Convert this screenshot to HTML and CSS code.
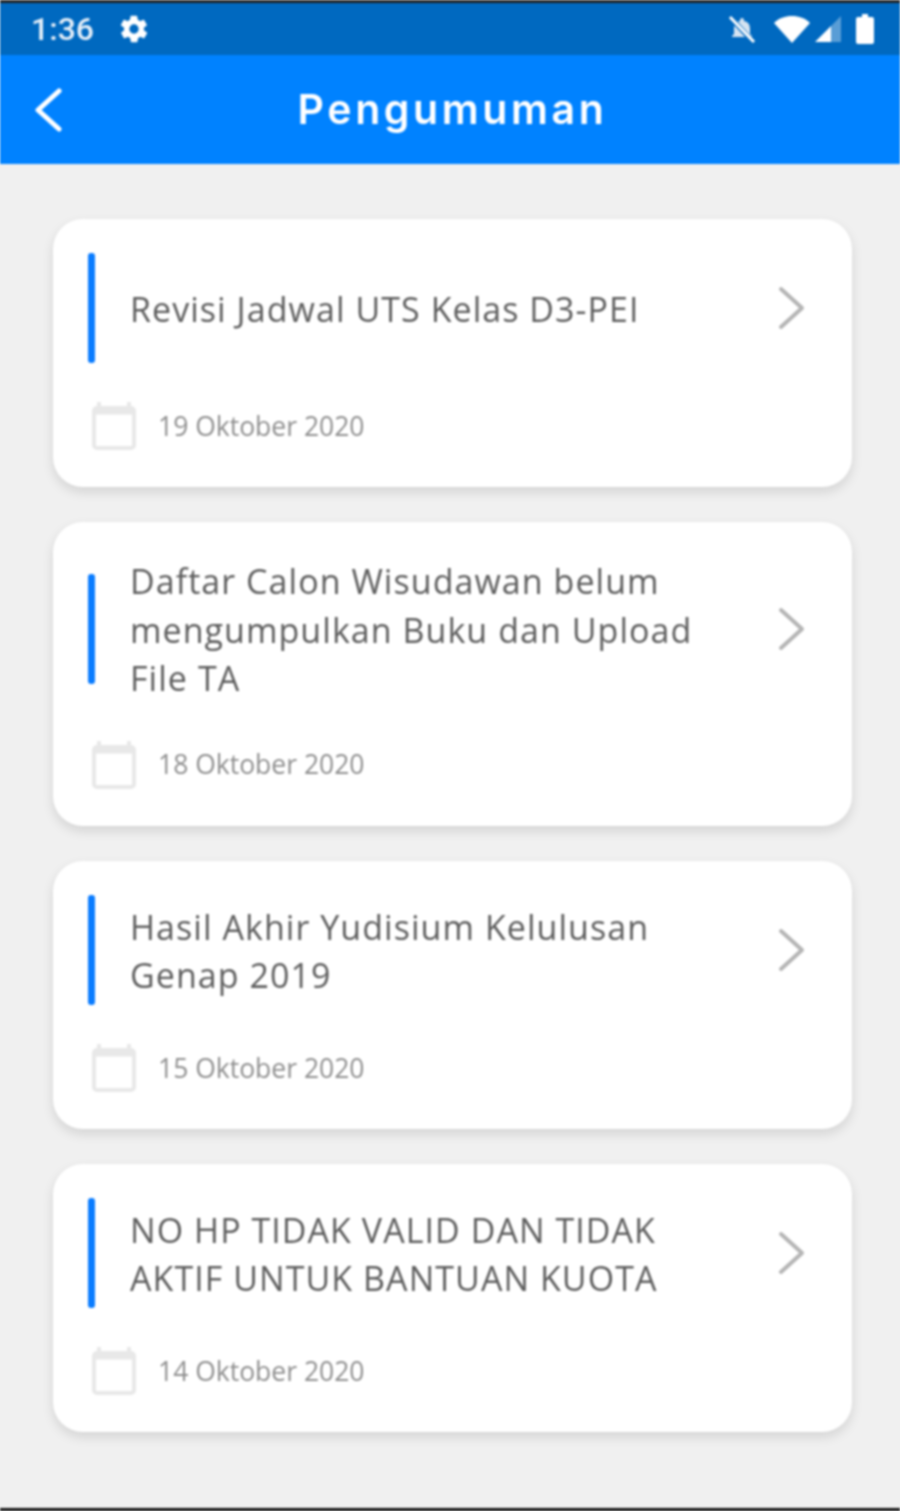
FILE: index.html
```html
<!DOCTYPE html>
<html lang="id">
<head>
<meta charset="utf-8">
<title>Pengumuman</title>
<link rel="stylesheet" href="styles.css">
</head>
<body>
<div class="app">
  <div class="edge-top"></div>
  <div class="statusbar">
    <div class="status-left">
      <span class="clock">1:36</span>
      <svg class="gear" viewBox="0 0 24 24"><path d="M19.4 13a7.6 7.6 0 0 0 0-2l2.1-1.6a.5.5 0 0 0 .1-.6l-2-3.5a.5.5 0 0 0-.6-.2l-2.5 1a7.3 7.3 0 0 0-1.7-1l-.4-2.7a.5.5 0 0 0-.5-.4h-4a.5.5 0 0 0-.5.4l-.4 2.7a7.3 7.3 0 0 0-1.7 1l-2.5-1a.5.5 0 0 0-.6.2l-2 3.5a.5.5 0 0 0 .1.6L4.6 11a7.6 7.6 0 0 0 0 2l-2.1 1.6a.5.5 0 0 0-.1.6l2 3.5c.1.2.4.3.6.2l2.5-1c.5.4 1.1.7 1.7 1l.4 2.7c0 .2.2.4.5.4h4c.3 0 .5-.2.5-.4l.4-2.7c.6-.3 1.2-.6 1.7-1l2.5 1c.2.1.5 0 .6-.2l2-3.5a.5.5 0 0 0-.1-.6zM12 15.5a3.5 3.5 0 1 1 0-7 3.5 3.5 0 0 1 0 7z"/></svg>
    </div>
    <div class="status-right">
      <svg class="bell" viewBox="0 0 28 28"><path class="bell-body" d="M14 3a2 2 0 0 0-2 2v1a7 7 0 0 0-6 7v6l-2 2v1h20v-1l-2-2v-6a7 7 0 0 0-6-7V5a2 2 0 0 0-2-2z"/><path class="bell-slash-gap" d="M3 3l22 24"/><path class="bell-slash" d="M2 2l24 25"/></svg>
      <svg class="wifi" viewBox="0 0 36 28"><path d="M0 8C5 3 11 1 18 1s13 2 18 7L18 28z"/></svg>
      <svg class="signal" viewBox="0 0 28 28"><path class="signal-empty" d="M27 1v26H17V11z"/><path d="M17 11v16H1z"/></svg>
      <svg class="battery" viewBox="0 0 18 30"><path d="M6 0h6v3h4a2 2 0 0 1 2 2v23a2 2 0 0 1-2 2H2a2 2 0 0 1-2-2V5a2 2 0 0 1 2-2h4z"/></svg>
    </div>
  </div>
  <header class="appbar">
    <svg class="back" viewBox="0 0 30 44"><path d="M26 3L5 22l21 19"/></svg>
    <h1 class="appbar-title">Pengumuman</h1>
  </header>
  <main class="list">
    <article class="card">
      <div class="card-main">
        <span class="accent"></span>
        <h2 class="card-title">Revisi Jadwal UTS Kelas D3-PEI</h2>
        <svg class="chevron" viewBox="0 0 28 44"><path d="M3 3l21 19L3 41"/></svg>
      </div>
      <div class="card-date">
        <svg class="calendar" viewBox="0 0 44 48"><path class="cal-ears" d="M7 0v6M37 0v6"/><rect class="cal-frame" x="2" y="6" width="40" height="40" rx="3"/><path class="cal-band" d="M2 9h40"/></svg>
        <span class="date-text">19 Oktober 2020</span>
      </div>
    </article>
    <article class="card">
      <div class="card-main">
        <span class="accent"></span>
        <h2 class="card-title">Daftar Calon Wisudawan belum mengumpulkan Buku dan Upload File TA</h2>
        <svg class="chevron" viewBox="0 0 28 44"><path d="M3 3l21 19L3 41"/></svg>
      </div>
      <div class="card-date">
        <svg class="calendar" viewBox="0 0 44 48"><path class="cal-ears" d="M7 0v6M37 0v6"/><rect class="cal-frame" x="2" y="6" width="40" height="40" rx="3"/><path class="cal-band" d="M2 9h40"/></svg>
        <span class="date-text">18 Oktober 2020</span>
      </div>
    </article>
    <article class="card">
      <div class="card-main">
        <span class="accent"></span>
        <h2 class="card-title">Hasil Akhir Yudisium Kelulusan Genap 2019</h2>
        <svg class="chevron" viewBox="0 0 28 44"><path d="M3 3l21 19L3 41"/></svg>
      </div>
      <div class="card-date">
        <svg class="calendar" viewBox="0 0 44 48"><path class="cal-ears" d="M7 0v6M37 0v6"/><rect class="cal-frame" x="2" y="6" width="40" height="40" rx="3"/><path class="cal-band" d="M2 9h40"/></svg>
        <span class="date-text">15 Oktober 2020</span>
      </div>
    </article>
    <article class="card">
      <div class="card-main">
        <span class="accent"></span>
        <h2 class="card-title">NO HP TIDAK VALID DAN TIDAK AKTIF UNTUK BANTUAN KUOTA</h2>
        <svg class="chevron" viewBox="0 0 28 44"><path d="M3 3l21 19L3 41"/></svg>
      </div>
      <div class="card-date">
        <svg class="calendar" viewBox="0 0 44 48"><path class="cal-ears" d="M7 0v6M37 0v6"/><rect class="cal-frame" x="2" y="6" width="40" height="40" rx="3"/><path class="cal-band" d="M2 9h40"/></svg>
        <span class="date-text">14 Oktober 2020</span>
      </div>
    </article>
  </main>
  <div class="edge-bottom"></div>
</div>
</body>
</html>
```
FILE: styles.css
```css
* { box-sizing: border-box; }
html, body { margin: 0; padding: 0; background: #f0f0f0; }
body { overflow: hidden; }
.app {
  width: 900px;
  height: 1511px;
  display: flex;
  flex-direction: column;
  background: #f0f0f0;
  font-family: "Open Sans", sans-serif;
  filter: blur(1px);
}
.edge-top { height: 3px; background: #222; flex: none; }
.edge-bottom { height: 3px; background: #111; flex: none; }
.statusbar {
  height: 52px;
  flex: none;
  background: #0069c0;
  display: flex;
  align-items: center;
  justify-content: space-between;
  padding: 0 26px 0 31px;
  color: #fff;
}
.status-left, .status-right { display: flex; align-items: center; }
.clock { font-family: Roboto, sans-serif; font-size: 32px; font-weight: 500; line-height: 1; color: #e4eef8; }
.gear { width: 32px; height: 32px; margin-left: 24px; fill: #fff; }
.bell { width: 28px; height: 28px; margin-right: 18px; }
.bell-body { fill: #d5e3f1; }
.bell-slash-gap { stroke: #0069c0; stroke-width: 5; fill: none; }
.bell-slash { stroke: #fff; stroke-width: 3; fill: none; }
.wifi { width: 36px; height: 28px; fill: #fff; }
.signal { width: 28px; height: 28px; fill: #fff; margin-left: 4px; }
.signal-empty { fill: #fff; opacity: .35; }
.battery { width: 18px; height: 30px; fill: #fff; margin-left: 14px; }
.appbar {
  height: 109px;
  flex: none;
  background: #0082ff;
  position: relative;
  display: flex;
  align-items: center;
  justify-content: center;
  padding-left: 5px;
}
.back {
  position: absolute;
  left: 33px;
  top: 33px;
  width: 30px;
  height: 44px;
  fill: none;
  stroke: #fff;
  stroke-width: 5;
  stroke-linecap: round;
  stroke-linejoin: round;
}
.appbar-title {
  margin: 0;
  font-family: Inter, sans-serif;
  font-weight: 600;
  font-size: 41px;
  letter-spacing: 3.6px;
  line-height: 1;
  color: #fff;
}
.list {
  flex: 1;
  display: flex;
  flex-direction: column;
  gap: 35.4px;
  padding: 55px 48px 0 53px;
}
.card {
  background: #fff;
  border-radius: 30px;
  padding: 34px 46px 37px 35px;
  box-shadow: 0 5px 12px rgba(0, 0, 0, .12);
}
.card-main {
  display: flex;
  align-items: center;
  min-height: 110px;
}
.accent {
  width: 7px;
  height: 110px;
  flex: none;
  border-radius: 3px;
  background: #0a7cff;
}
.card-title {
  margin: 0 0 0 35px;
  flex: 1;
  position: relative;
  top: 1px;
  font-size: 34px;
  font-weight: 400;
  letter-spacing: 1.05px;
  line-height: 48.4px;
  color: #5e5e5e;
}
.chevron {
  width: 28px;
  height: 44px;
  flex: none;
  margin-left: 20px;
  fill: none;
  stroke: #b5b5b5;
  stroke-width: 4;
  stroke-linecap: round;
  stroke-linejoin: round;
}
.card-date {
  display: flex;
  align-items: center;
  margin-top: 39px;
  padding-left: 4px;
  height: 48px;
}
.calendar { width: 44px; height: 48px; flex: none; fill: none; stroke: #e8e8e8; }
.cal-ears { stroke-width: 4; }
.cal-frame { stroke-width: 4; }
.cal-band { stroke-width: 7; }
.date-text {
  margin-left: 22px;
  font-size: 26.5px;
  line-height: 1;
  color: #8f8f8f;
}
```
